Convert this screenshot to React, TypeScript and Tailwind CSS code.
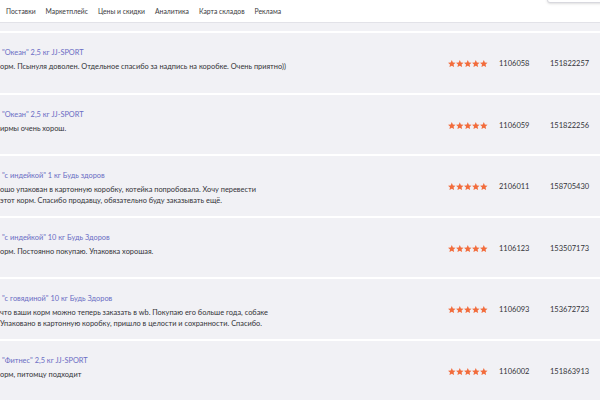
const nav = ['Поставки', 'Маркетплейс', 'Цены и скидки', 'Аналитика', 'Карта складов', 'Реклама'];

interface Review {
  title: string;
  lines: string[];
  article: string;
  id: string;
}

const reviews: Review[] = [
  {
    title: '"Океан" 2,5 кг JJ-SPORT',
    lines: ['орм. Псынуля доволен. Отдельное спасибо за надпись на коробке. Очень приятно))'],
    article: '1106058',
    id: '151822257',
  },
  {
    title: '"Океан" 2,5 кг JJ-SPORT',
    lines: ['ирмы очень хорош.'],
    article: '1106059',
    id: '151822256',
  },
  {
    title: '"с индейкой" 1 кг Будь здоров',
    lines: [
      'ошо упакован в картонную коробку, котейка попробовала. Хочу перевести',
      'этот корм. Спасибо продавцу, обязательно буду заказывать ещё.',
    ],
    article: '2106011',
    id: '158705430',
  },
  {
    title: '"с индейкой" 10 кг Будь Здоров',
    lines: ['орм. Постоянно покупаю. Упаковка хорошая.'],
    article: '1106123',
    id: '153507173',
  },
  {
    title: '"с говядиной" 10 кг Будь Здоров',
    lines: [
      'что ваши корм можно теперь заказать в wb. Покупаю его больше года, собаке',
      'Упаковано в картонную коробку, пришло в целости и сохранности. Спасибо.',
    ],
    article: '1106093',
    id: '153672723',
  },
  {
    title: '"Фитнес" 2,5 кг JJ-SPORT',
    lines: ['орм, питомцу подходит'],
    article: '1106002',
    id: '151863913',
  },
];

function Star() {
  return (
    <svg viewBox="0 0 24 23" className="w-[7.6px] h-[7.3px]" fill="#f26c3c">
      <path d="M12 0l3.5 7.6 8.3.9-6.2 5.6 1.8 8.2L12 18.1l-7.4 4.2 1.8-8.2L.2 8.5l8.3-.9z" />
    </svg>
  );
}

function Stars() {
  return (
    <div className="flex gap-[0.5px]">
      {[0, 1, 2, 3, 4].map((i) => (
        <Star key={i} />
      ))}
    </div>
  );
}

export default function App() {
  return (
    <div
      className="relative w-[600px] h-[400px] overflow-hidden bg-white text-[#333338]"
      style={{ fontFamily: 'Lato, "Open Sans", sans-serif' }}
    >
      {/* dropdown edge top right */}
      <div className="absolute left-[547px] top-[-12px] w-[70px] h-[15px] bg-white border border-[#d8d8de] rounded-bl-[3px] shadow-sm" />

      {/* Header */}
      <div className="h-[23px] flex items-center gap-[10px] pl-[6px] text-[6.8px] text-[#3a3a40] border-b border-[#e2e2e8]">
        {nav.map((n) => (
          <span key={n}>{n}</span>
        ))}
      </div>
      <div className="h-[8px] bg-[#f1f1f5]" />

      {/* Reviews */}
      <div className="flex flex-col gap-[2px] pt-[2px]">
        {reviews.map((r, i) => (
          <div key={i} className="h-[59.5px] bg-[#f1f1f5] flex items-start shrink-0">
            <div className="flex-1 pt-[14px] text-[7.4px] leading-[11px]">
              <div className="pl-[2px] text-[#6a6dc4]">{r.title}</div>
              <div className="mt-[3px]">
                {r.lines.map((l, j) => (
                  <div key={j}>{l}</div>
                ))}
              </div>
            </div>
            <div className="self-stretch flex items-center pt-[2px] text-[7.5px]">
              <div className="w-[51px]">
                <Stars />
              </div>
              <div className="w-[51px]">{r.article}</div>
              <div className="w-[50px]">{r.id}</div>
            </div>
          </div>
        ))}
      </div>
    </div>
  );
}
